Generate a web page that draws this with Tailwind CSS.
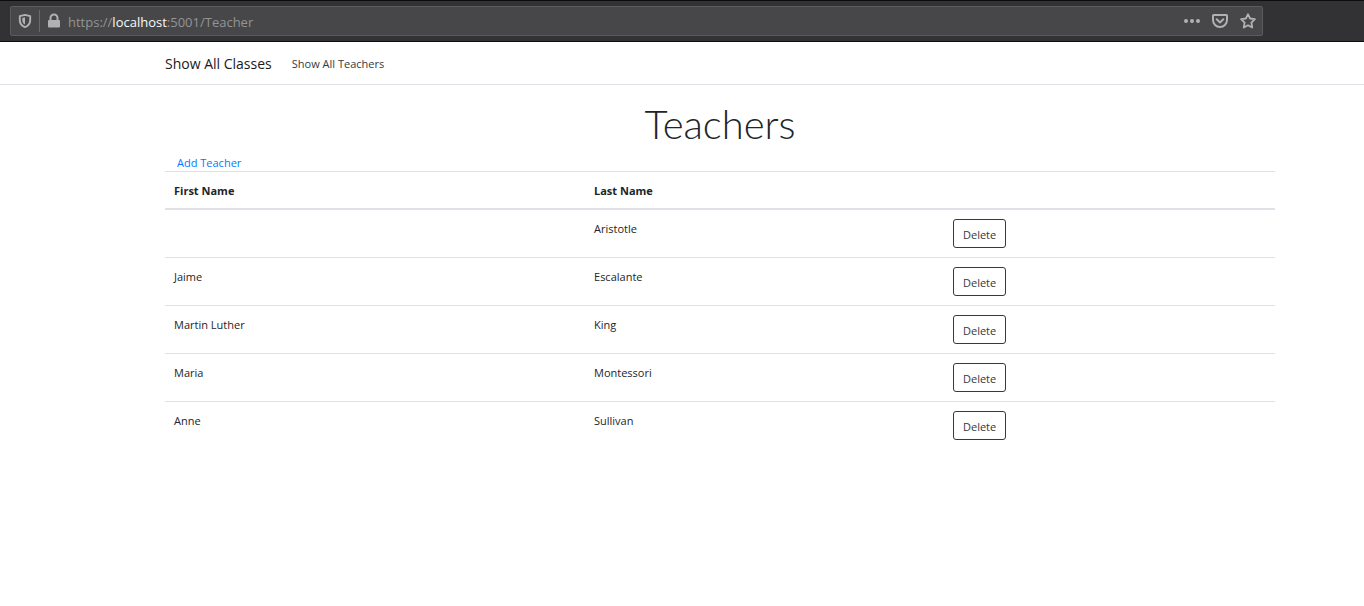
<!DOCTYPE html>
<html lang="en">
<head>
<meta charset="utf-8">
<title>Teachers</title>
<script src="https://cdn.jsdelivr.net/npm/@tailwindcss/browser@4"></script>
</head>
<body class="bg-white font-['Open_Sans','Noto_Sans',sans-serif] text-[11px] leading-[20px] text-[#212529]">
<div class="h-[42px] border-y border-[#0c0c0d] bg-[#323234] pt-[5px] pr-[101px] pl-[10px]">
  <div class="flex h-[30px] items-center rounded-xs border border-[#5b5b5e] bg-[#474749] pr-[6px] pl-[6px] text-[#b1b1b3]">
    <button type="button" aria-label="Tracking protection" class="size-4">
      <svg viewBox="0 0 16 16" class="size-4" fill="none"><path d="M8 1.900 13.200 3.200V7c0 3.500-1.900 5.900-5.200 7.100C4.700 12.900 2.800 10.500 2.800 7V3.200z" stroke="currentColor" stroke-width="1.900" stroke-linejoin="round"/><path d="M8 4.300v7.300C6.100 10.500 5.300 9 5.300 7V5.100z" fill="currentColor"/></svg>
    </button>
    <span class="ml-[6px] h-[22px] w-px bg-[#69696c]"></span>
    <button type="button" aria-label="Site information" class="ml-[6px] size-4">
      <svg viewBox="0 0 16 16" class="size-4"><path d="M4.500 8V5a3.500 3.500 0 0 1 7 0v3" fill="none" stroke="currentColor" stroke-width="2"/><rect x="2" y="7" width="12" height="7.500" rx="1" fill="currentColor"/></svg>
    </button>
    <a href="#" class="ml-[6px] flex-1 pt-px text-[13px] text-[#949496]">https://<span class="text-[#f9f9fa]">localhost</span>:5001/Teacher</a>
    <div class="flex gap-3">
      <button type="button" aria-label="Page actions" class="size-4"><svg viewBox="0 0 16 16" class="size-4" fill="currentColor"><circle cx="2" cy="8" r="2"/><circle cx="8" cy="8" r="2"/><circle cx="14" cy="8" r="2"/></svg></button>
      <button type="button" aria-label="Save to Pocket" class="size-4"><svg viewBox="0 0 16 16" class="size-4" fill="none" stroke="currentColor" stroke-width="2" stroke-linejoin="round" stroke-linecap="round"><path d="M1.700 2h12.600a.7.7 0 0 1 .7.7V7A7 7 0 0 1 1 7V2.700a.7.7 0 0 1 .7-.7z"/><path d="M4.700 6.300 8 9.400l3.300-3.100"/></svg></button>
      <button type="button" aria-label="Bookmark" class="size-4"><svg viewBox="0 0 16 16" class="size-4" fill="none" stroke="currentColor" stroke-width="1.800" stroke-linejoin="round"><path d="m8 1.200 2.100 4.300 4.800.7-3.500 3.400.8 4.900L8 12.200l-4.200 2.300.8-4.900L1.100 6.200l4.800-.7z"/></svg></button>
    </div>
  </div>
</div>
<nav class="flex h-[43px] items-center gap-5 border-b border-[#dee2e6] pt-[2px] pl-[165px]">
  <a href="#" class="text-[14px] text-[#1a1a1a]">Show All Classes</a>
  <a href="#" class="text-[#343a40]">Show All Teachers</a>
</nav>
<main class="pt-[17px] pr-[89px] pl-[165px]">
  <h1 class="text-center font-[Lato,sans-serif] text-[40px] leading-[44px] font-light">Teachers</h1>
  <div class="mt-[7px] h-[18px] pl-3"><a href="#" class="text-[#007bff]">Add Teacher</a></div>
  <table class="w-full table-fixed border-separate border-spacing-0 text-left">
    <colgroup><col class="w-[37.84%]"><col class="w-[32.34%]"><col></colgroup>
    <thead>
      <tr class="[&>*]:border-t [&>*]:border-b-2 [&>*]:border-[#dee2e6] [&>*]:px-[9px] [&>*]:pt-[9px] [&>*]:pb-[7px]"><th>First Name</th><th>Last Name</th><td></td></tr>
    </thead>
    <tbody class="align-top [&_td]:border-[#dee2e6] [&_td]:p-[9px] [&>tr+tr>td]:border-t">
      <tr><td></td><td>Aristotle</td><td><button type="button" class="block h-[29px] rounded-[3px] border border-[#343a40] px-[9px] pt-[2px] text-[#343a40]">Delete</button></td></tr>
      <tr><td>Jaime</td><td>Escalante</td><td><button type="button" class="block h-[29px] rounded-[3px] border border-[#343a40] px-[9px] pt-[2px] text-[#343a40]">Delete</button></td></tr>
      <tr><td>Martin Luther</td><td>King</td><td><button type="button" class="block h-[29px] rounded-[3px] border border-[#343a40] px-[9px] pt-[2px] text-[#343a40]">Delete</button></td></tr>
      <tr><td>Maria</td><td>Montessori</td><td><button type="button" class="block h-[29px] rounded-[3px] border border-[#343a40] px-[9px] pt-[2px] text-[#343a40]">Delete</button></td></tr>
      <tr><td>Anne</td><td>Sullivan</td><td><button type="button" class="block h-[29px] rounded-[3px] border border-[#343a40] px-[9px] pt-[2px] text-[#343a40]">Delete</button></td></tr>
    </tbody>
  </table>
</main>
</body>
</html>
